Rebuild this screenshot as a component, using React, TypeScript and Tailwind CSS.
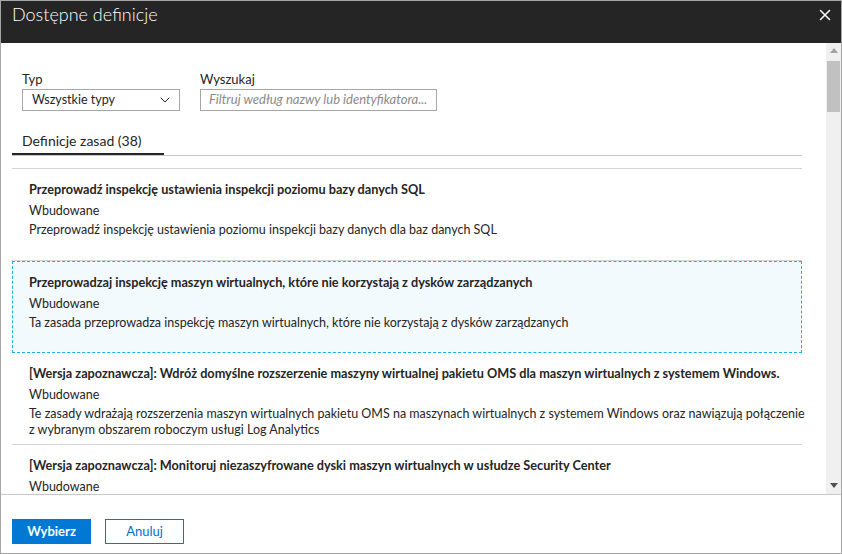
import { ChevronDown, X } from "lucide-react"

const font = { fontFamily: "Lato, 'Noto Sans', sans-serif" }

type Policy = {
  title: string
  kind: string
  lines: string[]
  selected?: boolean
}

const policies: Policy[] = [
  {
    title: "Przeprowadź inspekcję ustawienia inspekcji poziomu bazy danych SQL",
    kind: "Wbudowane",
    lines: ["Przeprowadź inspekcję ustawienia poziomu inspekcji bazy danych dla baz danych SQL"],
  },
  {
    title: "Przeprowadzaj inspekcję maszyn wirtualnych, które nie korzystają z dysków zarządzanych",
    kind: "Wbudowane",
    lines: ["Ta zasada przeprowadza inspekcję maszyn wirtualnych, które nie korzystają z dysków zarządzanych"],
    selected: true,
  },
  {
    title:
      "[Wersja zapoznawcza]: Wdróż domyślne rozszerzenie maszyny wirtualnej pakietu OMS dla maszyn wirtualnych z systemem Windows.",
    kind: "Wbudowane",
    lines: [
      "Te zasady wdrażają rozszerzenia maszyn wirtualnych pakietu OMS na maszynach wirtualnych z systemem Windows oraz nawiązują połączenie",
      "z wybranym obszarem roboczym usługi Log Analytics",
    ],
  },
  {
    title: "[Wersja zapoznawcza]: Monitoruj niezaszyfrowane dyski maszyn wirtualnych w usłudze Security Center",
    kind: "Wbudowane",
    lines: [],
  },
]

function PolicyRow({ p }: { p: Policy }) {
  return (
    <div
      className={
        p.selected
          ? "h-[92px] shrink-0 border border-dashed border-[#1ab0e8] bg-[#f3fafd] px-4 pt-[10px]"
          : "h-[92px] shrink-0 border-b border-[#d4d4d4] px-[17px] pt-[10px]"
      }
    >
      <p className="whitespace-nowrap text-[12.7px] font-bold leading-[20px] text-[#252525]">{p.title}</p>
      <p className="mt-[2px] text-[12.5px] leading-[20px] text-[#252525]">{p.kind}</p>
      {p.lines.length > 0 && (
        <div className="mt-[1px] text-[12.5px] leading-[16px] text-[#252525]">
          {p.lines.map((l) => (
            <p key={l} className="whitespace-nowrap">{l}</p>
          ))}
        </div>
      )}
    </div>
  )
}

export default function App() {
  return (
    <div className="flex h-[554px] w-[842px] flex-col overflow-hidden border border-[#a6a6a6] bg-white" style={font}>
      <header className="flex h-[42px] shrink-0 items-start justify-between bg-[#252525] pl-[11px] pr-[7px]">
        <h1 className="mt-0 text-[18px] font-light leading-[26px] text-white">Dostępne definicje</h1>
        <button className="mt-[5px] text-white">
          <X size={18} strokeWidth={2} />
        </button>
      </header>

      <div className="flex min-h-0 flex-1">
        <div className="min-w-0 flex-1 overflow-hidden pl-[11px] pr-6">
          <div className="flex gap-[20px] pl-[10px] pt-[28px]">
            <div className="w-[158px]">
              <label className="block text-[13px] leading-[17px] text-[#252525]">Typ</label>
              <div className="mt-[1px] flex h-[22px] items-center justify-between border border-[#a6a6a6] pl-[9px] pr-[6px] text-[12.5px] text-[#252525]">
                <span>Wszystkie typy</span>
                <ChevronDown size={16} strokeWidth={1.5} />
              </div>
            </div>
            <div className="w-[237px]">
              <label className="block text-[13px] leading-[17px] text-[#252525]">Wyszukaj</label>
              <div className="mt-[1px] flex h-[22px] items-center whitespace-nowrap border border-[#a6a6a6] px-[8px] text-[13px] italic text-[#8a8a8a]">
                Filtruj według nazwy lub identyfikatora...
              </div>
            </div>
          </div>

          <div className="mt-[19px] flex items-end border-b border-[#c8c8c8]">
            <div className="w-[152px] border-b-2 border-[#252525] pb-[2px] pl-[10px] pt-px text-[14px] leading-[20px] text-[#252525]">
              Definicje zasad (38)
            </div>
          </div>

          <div className="mt-[12px] flex flex-col border-t border-[#d4d4d4]">
            {policies.map((p) => (
              <PolicyRow key={p.title} p={p} />
            ))}
          </div>
        </div>

        <div className="flex w-[15px] shrink-0 flex-col items-center bg-[#f0f0f0] pt-[5px] pb-[6px]">
          <svg width="8" height="5" viewBox="0 0 8 5" className="shrink-0">
            <path d="M4 0L8 5H0z" fill="#a3a3a3" />
          </svg>
          <div className="mt-[8px] h-[51px] w-[13px] bg-[#c1c1c1]" />
          <div className="flex-1" />
          <svg width="8" height="5" viewBox="0 0 8 5" className="shrink-0">
            <path d="M0 0H8L4 5z" fill="#505050" />
          </svg>
        </div>
      </div>

      <footer className="flex h-[59px] shrink-0 items-start gap-[14px] border-t border-[#c8c8c8] pl-[11px] pt-[24px]">
        <button className="h-[25px] w-[79px] bg-[#0078d4] text-[13px] font-bold text-white">Wybierz</button>
        <button className="h-[25px] w-[79px] border border-[#0078d4] bg-white text-[13px] text-[#0072c6]">Anuluj</button>
      </footer>
    </div>
  )
}
